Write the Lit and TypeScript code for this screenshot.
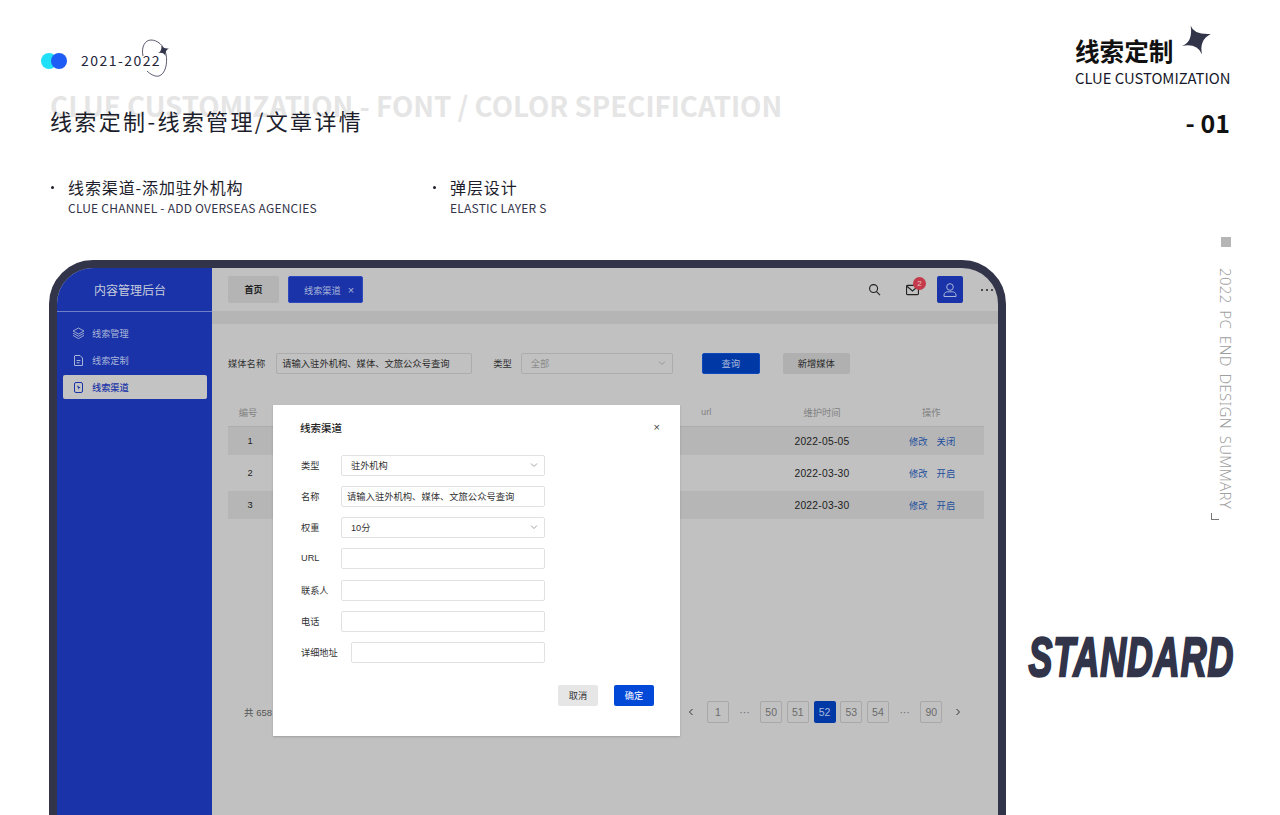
import { LitElement, html, css, svg } from "lit";
import { customElement } from "lit/decorators.js";

const chev = html`<svg class="chev" width="8" height="8" viewBox="0 0 8 8"><path d="M1 2.500 4 5.500 7 2.500" fill="none" stroke="currentColor" stroke-width=".8"/></svg>`;
const star = svg`<path d="M8.700.7Q12 10 28.700 9 17 15 20 29.300 15 18 0 21 11 17 8.700.7Z" fill="#32344a"/>`;

@customElement("app-root")
export class AppRoot extends LitElement {
  static styles = css`
    :host { display: block; width: 1280px; height: 815px; overflow: hidden; background: #fff; font-family: "Noto Sans CJK SC", "Noto Sans", sans-serif; color: #1d1e2c; }
    * { box-sizing: border-box; }
    .page { display: grid; grid-template-columns: 1006px 274px; height: 815px; overflow: hidden; }
    .left { padding-left: 41px; }
    .brand { position: relative; display: flex; align-items: center; height: 16px; margin-top: 53px; }
    .dots { position: relative; width: 26px; height: 16px; margin-right: 14px; }
    .dot { position: absolute; top: 0; width: 16px; height: 16px; border-radius: 50%; }
    .d1 { left: 0; background: #1fe0f7; }
    .d2 { left: 10px; background: #1d5cf5; }
    .year { font-size: 14px; letter-spacing: 1.45px; line-height: 16px; color: #24253a; padding-bottom: 2px; }
    .orbit { position: absolute; left: 100px; top: -14px; }
    .titlewrap { position: relative; margin: 36px 0 0 9px; height: 30px; }
    .ghost { position: absolute; left: 0; top: -15px; font-size: 27.7px; font-weight: 700; line-height: 30px; color: #e5e5e5; white-space: nowrap; }
    .title { position: relative; font-size: 22px; line-height: 30px; letter-spacing: 2.35px; color: #1d1e2c; white-space: nowrap; }
    .specs { display: flex; margin: 41px 0 0 10px; }
    .spec { position: relative; width: 382px; padding-left: 17px; }
    .spec::before { content: ""; position: absolute; left: 0; top: 10px; width: 3px; height: 3px; border-radius: 50%; background: #1d1e2c; }
    .spec b { display: block; font-weight: 400; font-size: 16px; line-height: 22px; letter-spacing: .9px; }
    .spec span { display: block; margin-top: 2px; font-size: 12px; line-height: 16px; color: #33344a; white-space: nowrap; letter-spacing: .22px; }
    .frame { margin: 44px 0 0 8px; width: 957px; height: 600px; border: 8px solid #32344a; border-radius: 44px 44px 0 0; overflow: hidden; position: relative; display: grid; grid-template-columns: 155px 786px; font-family: "Liberation Sans", "Noto Sans CJK SC", sans-serif; background: #c1c1c1; font-size: 9px; }
    .side { background: #1a33a8; color: #a9b5d8; }
    .logo { height: 44px; border-bottom: 1px solid #6f7fc8; display: flex; align-items: center; justify-content: center; padding-right: 9px; font-size: 12px; color: #c6cddc; }
    .nav { padding: 9px 5px 0 6px; display: flex; flex-direction: column; gap: 3px; }
    .item { height: 24px; display: flex; align-items: center; gap: 7px; padding-left: 9px; border-radius: 2px; font-size: 9.2px; }
    .item.on { background: #c3c3c3; color: #1a33a8; font-weight: 500; }
    .top { height: 43px; display: flex; align-items: center; padding: 0 5px 0 16px; }
    .tab { height: 27px; border-radius: 2px; display: flex; align-items: center; justify-content: center; }
    .home { width: 51px; background: #b4b4b4; color: #222; font-weight: 700; }
    .cur { width: 75px; margin-left: 9px; background: #1a33a8; color: #a9b5d8; gap: 7px; border: 1px solid #2e48c0; justify-content: flex-start; padding-left: 15px; font-size: 9.2px; }
    .cur span { font-size: 11px; }
    .tools { margin-left: auto; display: flex; align-items: center; }
    .mail { position: relative; display: flex; margin: 0 18px 0 25px; }
    .badge { position: absolute; left: 7px; top: -7px; width: 13px; height: 13px; border-radius: 50%; background: #c43a4a; color: #e9c3c8; font-size: 8px; line-height: 13px; text-align: center; }
    .avatar { width: 26px; height: 27px; border-radius: 2px; background: #1a33a8; display: flex; align-items: center; justify-content: center; }
    .more { margin-left: 18px; width: 12px; display: flex; gap: 3px; }
    .more i { flex: none; width: 2px; height: 2px; background: #222; border-radius: 50%; }
    .strip { height: 13px; background: #b5b5b5; }
    .filter { display: flex; align-items: center; height: 21px; margin: 29px 0 0 16px; color: #333; font-size: 9.3px; }
    .filter > span { padding-bottom: 1px; }
    .box { height: 21px; border: 1px solid #acacac; border-radius: 2px; display: flex; align-items: center; padding: 0 5px 1px; }
    .f1 { width: 196px; margin-left: 11px; color: #2a2a2a; background: #c1c1c1; }
    .f2 { width: 152px; margin-left: 9px; color: #8c8c8c; padding: 0 6px 1px 9px; justify-content: space-between; }
    .fl2 { margin-left: 21px; }
    .btn { height: 21px; border-radius: 2px; display: flex; align-items: center; justify-content: center; font-size: 9.3px; padding-bottom: 1px; }
    .q { width: 58px; margin-left: 29px; background: #0039a6; color: #aabbdd; border: 1px solid #0d49bd; }
    .n { width: 67px; margin-left: 23px; background: #b0b0b0; color: #2a2a2a; }
    .table { margin: 24px 14px 0 16px; }
    .row { display: grid; grid-template-columns: 40px 433px 61px 120px 1fr; align-items: center; font-size: 9.3px; color: #1d1d1d; }
    .row > :nth-child(1), .row > :nth-child(4) { text-align: center; }
    .row .n1 { padding-left: 4px; }
    .date { font-size: 10.3px; letter-spacing: .25px; }
    .head { height: 29px; color: #828282; border-bottom: 1px solid #adadad; }
    .head > :nth-child(5) { padding-left: 40px; }
    .r1 { height: 28px; background: #b6b6b6; }
    .r2 { height: 36px; }
    .r3 { height: 28px; background: #b6b6b6; }
    .ops { display: flex; gap: 9px; padding-left: 27px; color: #1e4f9e; }
    .pager { display: flex; align-items: center; height: 22px; margin-top: 182px; padding: 0 29px 0 32px; color: #6b6b6b; font-size: 9.5px; }
    .pager .count { color: #555; }
    .pages { margin-left: auto; display: flex; gap: 4.7px; }
    .pg { width: 22px; height: 22px; display: flex; align-items: center; justify-content: center; border-radius: 2px; font-size: 10.5px; }
    .pg.b { border: 1px solid #a8a8a8; }
    .pg.on { background: #0039a6; color: #aabbdd; }
    .modal { position: absolute; left: 216px; top: 137px; width: 407px; height: 331px; background: #fff; padding: 13px 26px 0 28px; color: #333; box-shadow: 0 1px 2px rgba(0,0,0,.18); }
    .mhead { display: flex; justify-content: space-between; align-items: center; height: 18px; font-size: 10.5px; font-weight: 500; color: #222; margin-left: -1px; }
    .x { font-size: 11px; color: #444; margin-right: -6px; font-weight: 400; }
    .form { display: flex; flex-direction: column; gap: 10.17px; width: 244px; margin-top: 19px; }
    .field { display: flex; align-items: center; height: 21px; font-size: 9.2px; }
    .field label { width: 40px; flex: none; padding-bottom: 1px; }
    .field.w label { width: 50px; }
    .ctrl { flex: 1; height: 21px; border: 1px solid #e1e1e1; border-radius: 2px; display: flex; align-items: center; justify-content: space-between; padding: 0 6px 1px 9px; color: #333; background: #fff; }
    .ctrl.t { padding-left: 5px; font-size: 9.3px; }
    .ctrl .chev { color: #888; }
    .actions { display: flex; justify-content: flex-end; gap: 16px; margin-top: 22px; }
    .actions .btn { width: 40px; font-size: 9.2px; }
    .cancel { background: #e6e6e6; color: #333; }
    .ok { background: #0349d8; color: #fff; }
    .right { display: flex; flex-direction: column; align-items: flex-end; padding-right: 50px; }
    .rt { padding-top: 25px; width: 155px; }
    .rtop { display: flex; gap: 9px; height: 42px; }
    .rtop b { font-size: 24.6px; line-height: 32px; margin-top: 9px; font-weight: 700; color: #111; white-space: nowrap; }
    .rsub { font-size: 14.8px; line-height: 22px; white-space: nowrap; color: #16172a; }
    .num { margin-top: 16px; font-size: 25px; font-weight: 700; line-height: 34px; color: #111; white-space: nowrap; }
    .sq { width: 10px; height: 10px; background: #b5b5b5; margin: 98px -1px 0 0; }
    .vert { writing-mode: vertical-rl; margin: 21px -4px 0 0; font-family: "Noto Sans", sans-serif; font-weight: 300; font-size: 15px; line-height: 16px; height: 242px; letter-spacing: .32px; word-spacing: 2.5px; color: #9f9f9f; white-space: nowrap; }
    .corner { width: 8px; height: 7px; margin: 3px 11px 0 0; border-left: 1px solid #777; border-bottom: 1px solid #777; }
    .std { margin: 117px -6px 0 0; width: 208px; height: 40px; display: flex; justify-content: flex-end; }
    .std span { font-family: "Liberation Sans", sans-serif; font-weight: 700; font-style: italic; font-size: 55px; line-height: 40px; color: #32344a; -webkit-text-stroke: 2.4px #32344a; transform: scaleX(.65); transform-origin: right center; white-space: nowrap; letter-spacing: 1.5px; padding-right: 2px; }
  `;

  render() {
    return html`<div class="page">
      <div class="left">
        <div class="brand">
          <div class="dots"><i class="dot d1"></i><i class="dot d2"></i></div>
          <div class="year">2021-2022</div>
          <svg class="orbit" width="30" height="42" viewBox="0 0 30 42">
            <path d="M2 17C0 8 4 1 10 1c6 0 13 5 15 14 2 10-1 20-7 22-4 1-9-2-12-5" fill="none" stroke="#32344a" stroke-width=".8"/>
            <g transform="translate(17 6) scale(.38)">${star}</g>
          </svg>
        </div>
        <div class="titlewrap">
          <div class="ghost">CLUE CUSTOMIZATION - FONT / COLOR SPECIFICATION</div>
          <div class="title">线索定制-线索管理/文章详情</div>
        </div>
        <div class="specs">
          <div class="spec"><b>线索渠道-添加驻外机构</b><span>CLUE CHANNEL - ADD OVERSEAS AGENCIES</span></div>
          <div class="spec"><b>弹层设计</b><span>ELASTIC LAYER S</span></div>
        </div>
        <div class="frame">
          <aside class="side">
            <div class="logo">内容管理后台</div>
            <nav class="nav">
              <div class="item">
                <svg width="13" height="13" viewBox="0 0 13 13" fill="none" stroke="currentColor" stroke-width=".9"><path d="M6.500 1 12 4 6.500 7 1 4Z"/><path d="M1 6.200 6.500 9.200 12 6.200M1 8.400 6.500 11.600 12 8.400"/></svg>
                线索管理
              </div>
              <div class="item">
                <svg width="13" height="13" viewBox="0 0 13 13" fill="none" stroke="currentColor" stroke-width="1"><path d="M3 1.500H8L10.500 4V11.500H2.500V2ZM4.600 6.500H8.400M4.600 8.800H7.500"/></svg>
                线索定制
              </div>
              <div class="item on">
                <svg width="13" height="13" viewBox="0 0 13 13" fill="none" stroke="currentColor"><rect x="2.500" y="1.500" width="8" height="10" rx="1.500"/><path d="M5 4.200 8.500 6.800 6.800 7.200 6.600 9Z" fill="currentColor" stroke="none"/></svg>
                线索渠道
              </div>
            </nav>
          </aside>
          <main>
            <div class="top">
              <div class="tab home">首页</div>
              <div class="tab cur">线索渠道 <span>×</span></div>
              <div class="tools">
                <svg width="13" height="13" viewBox="0 0 14 14" fill="none" stroke="#222" stroke-width="1.200"><circle cx="6" cy="6" r="4.300"/><path d="M9.200 9.200 13 13"/></svg>
                <div class="mail">
                  <svg width="13" height="12" viewBox="0 0 14 12" fill="none" stroke="#222" stroke-width="1.200"><rect x=".6" y="1" width="12.800" height="10" rx="1"/><path d="M1 2 7 7 13 2"/></svg>
                  <span class="badge">2</span>
                </div>
                <div class="avatar">
                  <svg width="16" height="16" viewBox="0 0 16 16" fill="none" stroke="#aab6dc" stroke-width="1"><circle cx="8" cy="5" r="3.300"/><path d="M2 14.500V13c0-2 2-3.200 3.600-3.200h4.800c1.600 0 3.600 1.200 3.600 3.200v1.500Z"/></svg>
                </div>
                <div class="more"><i></i><i></i><i></i></div>
              </div>
            </div>
            <div class="strip"></div>
            <div class="filter">
              <span>媒体名称</span>
              <div class="box f1">请输入驻外机构、媒体、文旅公众号查询</div>
              <span class="fl2">类型</span>
              <div class="box f2">全部 ${chev}</div>
              <div class="btn q">查询</div>
              <div class="btn n">新增媒体</div>
            </div>
            <div class="table">
              <div class="row head"><span>编号</span><span></span><span>url</span><span>维护时间</span><span>操作</span></div>
              <div class="row r1"><span class="n1">1</span><span></span><span></span><span class="date">2022-05-05</span><div class="ops"><span>修改</span><span>关闭</span></div></div>
              <div class="row r2"><span class="n1">2</span><span></span><span></span><span class="date">2022-03-30</span><div class="ops"><span>修改</span><span>开启</span></div></div>
              <div class="row r3"><span class="n1">3</span><span></span><span></span><span class="date">2022-03-30</span><div class="ops"><span>修改</span><span>开启</span></div></div>
            </div>
            <div class="pager">
              <span class="count">共 658</span>
              <div class="pages">
                <span class="pg"><svg width="8" height="8" viewBox="0 0 8 8"><path d="M5.500 1 2.500 4 5.500 7" fill="none" stroke="#333"/></svg></span>
                <span class="pg b">1</span><span class="pg">···</span>
                <span class="pg b">50</span><span class="pg b">51</span><span class="pg on">52</span><span class="pg b">53</span><span class="pg b">54</span>
                <span class="pg">···</span><span class="pg b">90</span>
                <span class="pg"><svg width="8" height="8" viewBox="0 0 8 8"><path d="M2.500 1 5.500 4 2.500 7" fill="none" stroke="#333"/></svg></span>
              </div>
            </div>
          </main>
          <div class="modal">
            <div class="mhead"><span>线索渠道</span><span class="x">×</span></div>
            <div class="form">
              <div class="field"><label>类型</label><div class="ctrl">驻外机构 ${chev}</div></div>
              <div class="field"><label>名称</label><div class="ctrl t">请输入驻外机构、媒体、文旅公众号查询</div></div>
              <div class="field"><label>权重</label><div class="ctrl">10分 ${chev}</div></div>
              <div class="field"><label>URL</label><div class="ctrl"></div></div>
              <div class="field"><label>联系人</label><div class="ctrl"></div></div>
              <div class="field"><label>电话</label><div class="ctrl"></div></div>
              <div class="field w"><label>详细地址</label><div class="ctrl"></div></div>
            </div>
            <div class="actions"><div class="btn cancel">取消</div><div class="btn ok">确定</div></div>
          </div>
        </div>
      </div>
      <div class="right">
        <div class="rt">
          <div class="rtop"><b>线索定制</b><svg width="30" height="30" viewBox="0 0 30 30">${star}</svg></div>
          <div class="rsub">CLUE CUSTOMIZATION</div>
        </div>
        <div class="num">- 01</div>
        <div class="sq"></div>
        <div class="vert">2022 PC END DESIGN SUMMARY</div>
        <div class="corner"></div>
        <div class="std"><span>STANDARD</span></div>
      </div>
    </div>`;
  }
}
